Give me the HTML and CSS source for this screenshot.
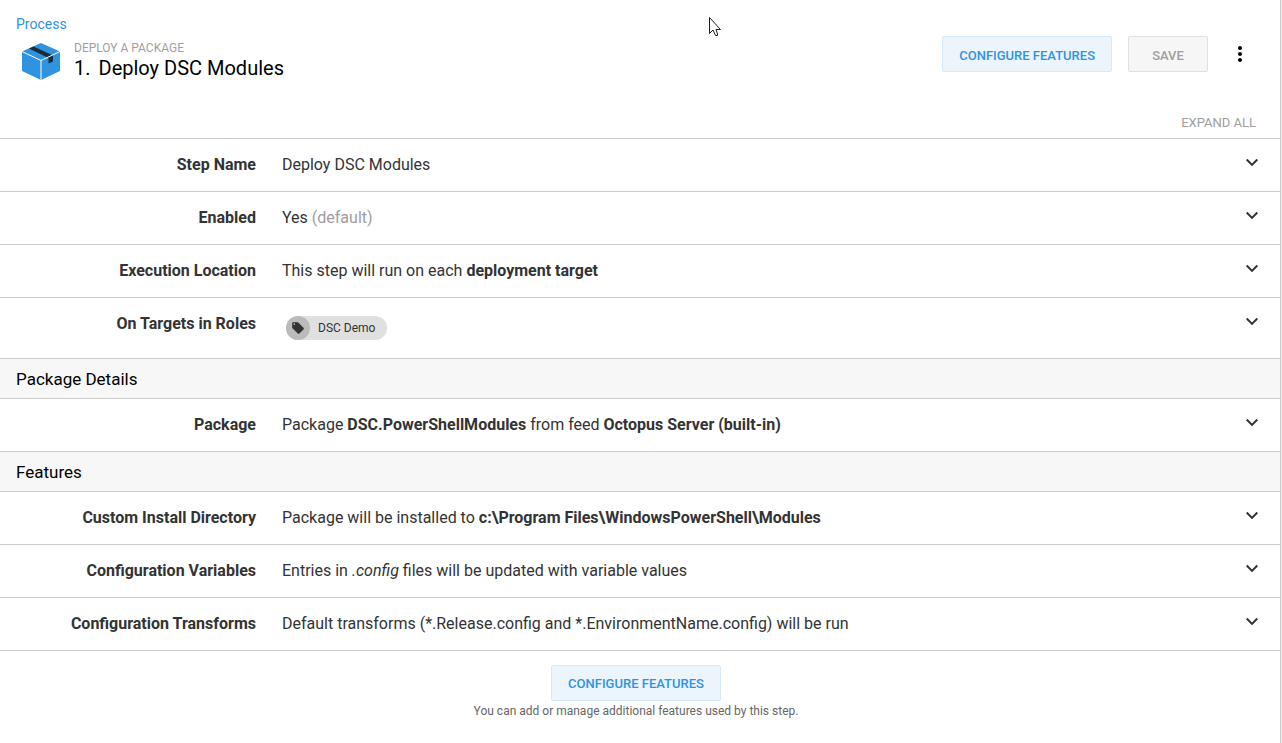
FILE: index.html
```html
<!DOCTYPE html>
<html lang="en">
<head>
<meta charset="utf-8">
<title>Deploy DSC Modules</title>
<link rel="stylesheet" href="styles.css">
</head>
<body>
<svg class="defs" aria-hidden="true">
  <symbol id="chevron" viewBox="0 2 24 24"><path d="M7.41 7.84 12 12.42l4.59-4.58L18 9.25l-6 6-6-6z"/></symbol>
</svg>
<main class="page">
  <header class="header">
    <a class="crumb" href="#">Process</a>
    <div class="header-row">
      <svg class="package" viewBox="0 0 40 40" aria-hidden="true">
        <path fill="#2f93e0" d="M20 2 39 10.500V30L20 39 1 30V10.500z"/>
        <path fill="#1b2b38" d="M12.500 5.500 32 14.500V20.500L27.500 22.500V17L8 7.500z"/>
        <path fill="none" stroke="#fff" stroke-width="1" d="M1 10.500 20 19.500 39 10.500M20 19.500V39"/>
      </svg>
      <div class="heading">
        <div class="kind">DEPLOY A PACKAGE</div>
        <h1 class="title"><span>1.</span><span>Deploy DSC Modules</span></h1>
      </div>
      <div class="actions">
        <button class="btn btn-blue" type="button">CONFIGURE FEATURES</button>
        <button class="btn btn-save" type="button" disabled>SAVE</button>
        <button class="icon-btn" type="button" aria-label="More options">
          <svg viewBox="0 0 24 24" aria-hidden="true"><path d="M12 8c1.100 0 2-.9 2-2s-.9-2-2-2-2 .9-2 2 .9 2 2 2zm0 2c-1.100 0-2 .9-2 2s.9 2 2 2 2-.9 2-2-.9-2-2-2zm0 6c-1.100 0-2 .9-2 2s.9 2 2 2 2-.9 2-2-.9-2-2-2z"/></svg>
        </button>
      </div>
    </div>
    <button class="expand-all" type="button">EXPAND ALL</button>
  </header>

  <section class="row"><h3 class="label">Step Name</h3><div class="value">Deploy DSC Modules</div><button class="toggle" type="button" aria-label="Expand Step Name"><svg aria-hidden="true"><use href="#chevron"/></svg></button></section>
  <section class="row"><h3 class="label">Enabled</h3><div class="value">Yes <span class="muted">(default)</span></div><button class="toggle" type="button" aria-label="Expand Enabled"><svg aria-hidden="true"><use href="#chevron"/></svg></button></section>
  <section class="row"><h3 class="label">Execution Location</h3><div class="value">This step will run on each <strong>deployment target</strong></div><button class="toggle" type="button" aria-label="Expand Execution Location"><svg aria-hidden="true"><use href="#chevron"/></svg></button></section>
  <section class="row"><h3 class="label">On Targets in Roles</h3><div class="value"><span class="chip"><span class="chip-icon"><svg viewBox="0 0 24 24" aria-hidden="true"><path d="M21.410 11.580l-9-9C12.050 2.220 11.550 2 11 2H4c-1.100 0-2 .9-2 2v7c0 .55.22 1.050.59 1.420l9 9c.36.36.86.58 1.410.58.55 0 1.050-.22 1.410-.59l7-7c.37-.36.59-.86.59-1.410 0-.55-.23-1.060-.59-1.420zM5.500 7C4.670 7 4 6.330 4 5.500S4.670 4 5.500 4 7 4.670 7 5.500 6.330 7 5.500 7z"/></svg></span>DSC Demo</span></div><button class="toggle" type="button" aria-label="Expand On Targets in Roles"><svg aria-hidden="true"><use href="#chevron"/></svg></button></section>
  <h2 class="group">Package Details</h2>
  <section class="row"><h3 class="label">Package</h3><div class="value">Package <strong>DSC.PowerShellModules</strong> from feed <strong>Octopus Server (built-in)</strong></div><button class="toggle" type="button" aria-label="Expand Package"><svg aria-hidden="true"><use href="#chevron"/></svg></button></section>
  <h2 class="group">Features</h2>
  <section class="row"><h3 class="label">Custom Install Directory</h3><div class="value">Package will be installed to <strong>c:\Program Files\WindowsPowerShell\Modules</strong></div><button class="toggle" type="button" aria-label="Expand Custom Install Directory"><svg aria-hidden="true"><use href="#chevron"/></svg></button></section>
  <section class="row"><h3 class="label">Configuration Variables</h3><div class="value">Entries in <em>.config</em> files will be updated with variable values</div><button class="toggle" type="button" aria-label="Expand Configuration Variables"><svg aria-hidden="true"><use href="#chevron"/></svg></button></section>
  <section class="row"><h3 class="label">Configuration Transforms</h3><div class="value">Default transforms (*.Release.config and *.EnvironmentName.config) will be run</div><button class="toggle" type="button" aria-label="Expand Configuration Transforms"><svg aria-hidden="true"><use href="#chevron"/></svg></button></section>
  <footer class="footer">
    <button class="btn btn-blue" type="button">CONFIGURE FEATURES</button>
    <p class="note">You can add or manage additional features used by this step.</p>
  </footer>
</main>
<svg class="cursor" viewBox="0 0 12 20" aria-hidden="true"><path fill="#fff" stroke="#1c1c28" d="M.5.500V16.500L4 13 6.500 18.500H8.500V17L7 12.500H11.500z"/></svg>
</body>
</html>
```
FILE: styles.css
```css
* {
  box-sizing: border-box;
}

body {
  margin: 0;
  background: #eee;
  color: #333;
  font: 16px/24px Roboto, sans-serif;
}

h1, h2, h3, p {
  margin: 0;
  font-weight: 400;
}

button {
  font-family: inherit;
  cursor: pointer;
}

.defs {
  display: none;
}

.page {
  min-height: 100vh;
  margin-right: 1px;
  border-right: 1px solid #ccc;
  background: #fff;
}

.header {
  display: flex;
  flex-direction: column;
  padding: 16px 16px 4px;
}

.crumb {
  align-self: flex-start;
  color: #2f93e0;
  font-size: 14px;
  line-height: 16px;
  text-decoration: none;
}

.header-row {
  display: flex;
  align-items: flex-start;
  padding-top: 4px;
}

.package {
  width: 40px;
  height: 40px;
  margin: 5px 13px 0 5px;
}

.heading {
  flex: 1;
  padding-top: 4px;
}

.kind {
  color: #9e9e9e;
  font-size: 12px;
  line-height: 16px;
}

.title {
  display: flex;
  gap: 8px;
  color: #000;
  font-size: 20px;
  line-height: 24px;
}

.actions {
  display: flex;
  align-items: center;
  gap: 16px;
  padding-right: 8px;
}

.btn {
  height: 36px;
  padding: 0 16px;
  border: 1px solid;
  border-radius: 2px;
  font-size: 13px;
  font-weight: 500;
}

.actions .btn {
  padding-top: 2px;
}

.btn-blue {
  border-color: #d5eafa;
  background: #ecf4fc;
  color: #2f93e0;
}

.btn-save {
  min-width: 80px;
  border-color: #e0e0e0;
  background: #f6f6f6;
  color: #9e9e9e;
}

.icon-btn {
  width: 32px;
  height: 36px;
  padding: 0;
  border: 0;
  background: none;
}

.icon-btn svg {
  display: block;
  width: 24px;
  height: 24px;
  margin: auto;
}

.expand-all {
  align-self: flex-end;
  margin-top: 30px;
  padding: 0 8px;
  border: 0;
  background: none;
  color: #9e9e9e;
  font-size: 13px;
  line-height: 24px;
}

.header {
  padding-bottom: 3px;
}

.row {
  display: flex;
  align-items: flex-start;
  padding: 14px 16px;
  border-top: 1px solid #ccc;
}

.label {
  width: 240px;
  margin-right: 26px;
  font-size: 16px;
  font-weight: 700;
  text-align: right;
}

.value {
  flex: 1;
}

.muted {
  color: #9e9e9e;
}

.toggle {
  width: 24px;
  height: 24px;
  padding: 0;
  border: 0;
  background: none;
}

.toggle svg {
  display: block;
  width: 24px;
  height: 24px;
  fill: #333;
}

.chip {
  display: flex;
  align-items: center;
  gap: 8px;
  width: fit-content;
  height: 24px;
  margin: 4px;
  padding-right: 12px;
  border-radius: 12px;
  background: #e0e0e0;
  font-size: 12px;
}

.chip-icon {
  display: grid;
  place-items: center;
  width: 24px;
  height: 24px;
  border-radius: 50%;
  background: #bbb;
}

.chip-icon svg {
  width: 14px;
  height: 14px;
  fill: #333;
}

.group {
  padding: 8px 16px 7px;
  border-top: 1px solid #ccc;
  background: #f7f7f7;
  color: #000;
  font-size: 17px;
}

.footer {
  display: flex;
  flex-direction: column;
  align-items: center;
  padding: 14px 16px 20px 8px;
  border-top: 1px solid #ccc;
}

.note {
  color: #666;
  font-size: 12px;
  line-height: 20px;
}

.cursor {
  position: absolute;
  top: 17px;
  left: 709px;
  width: 12px;
  height: 20px;
}
```
